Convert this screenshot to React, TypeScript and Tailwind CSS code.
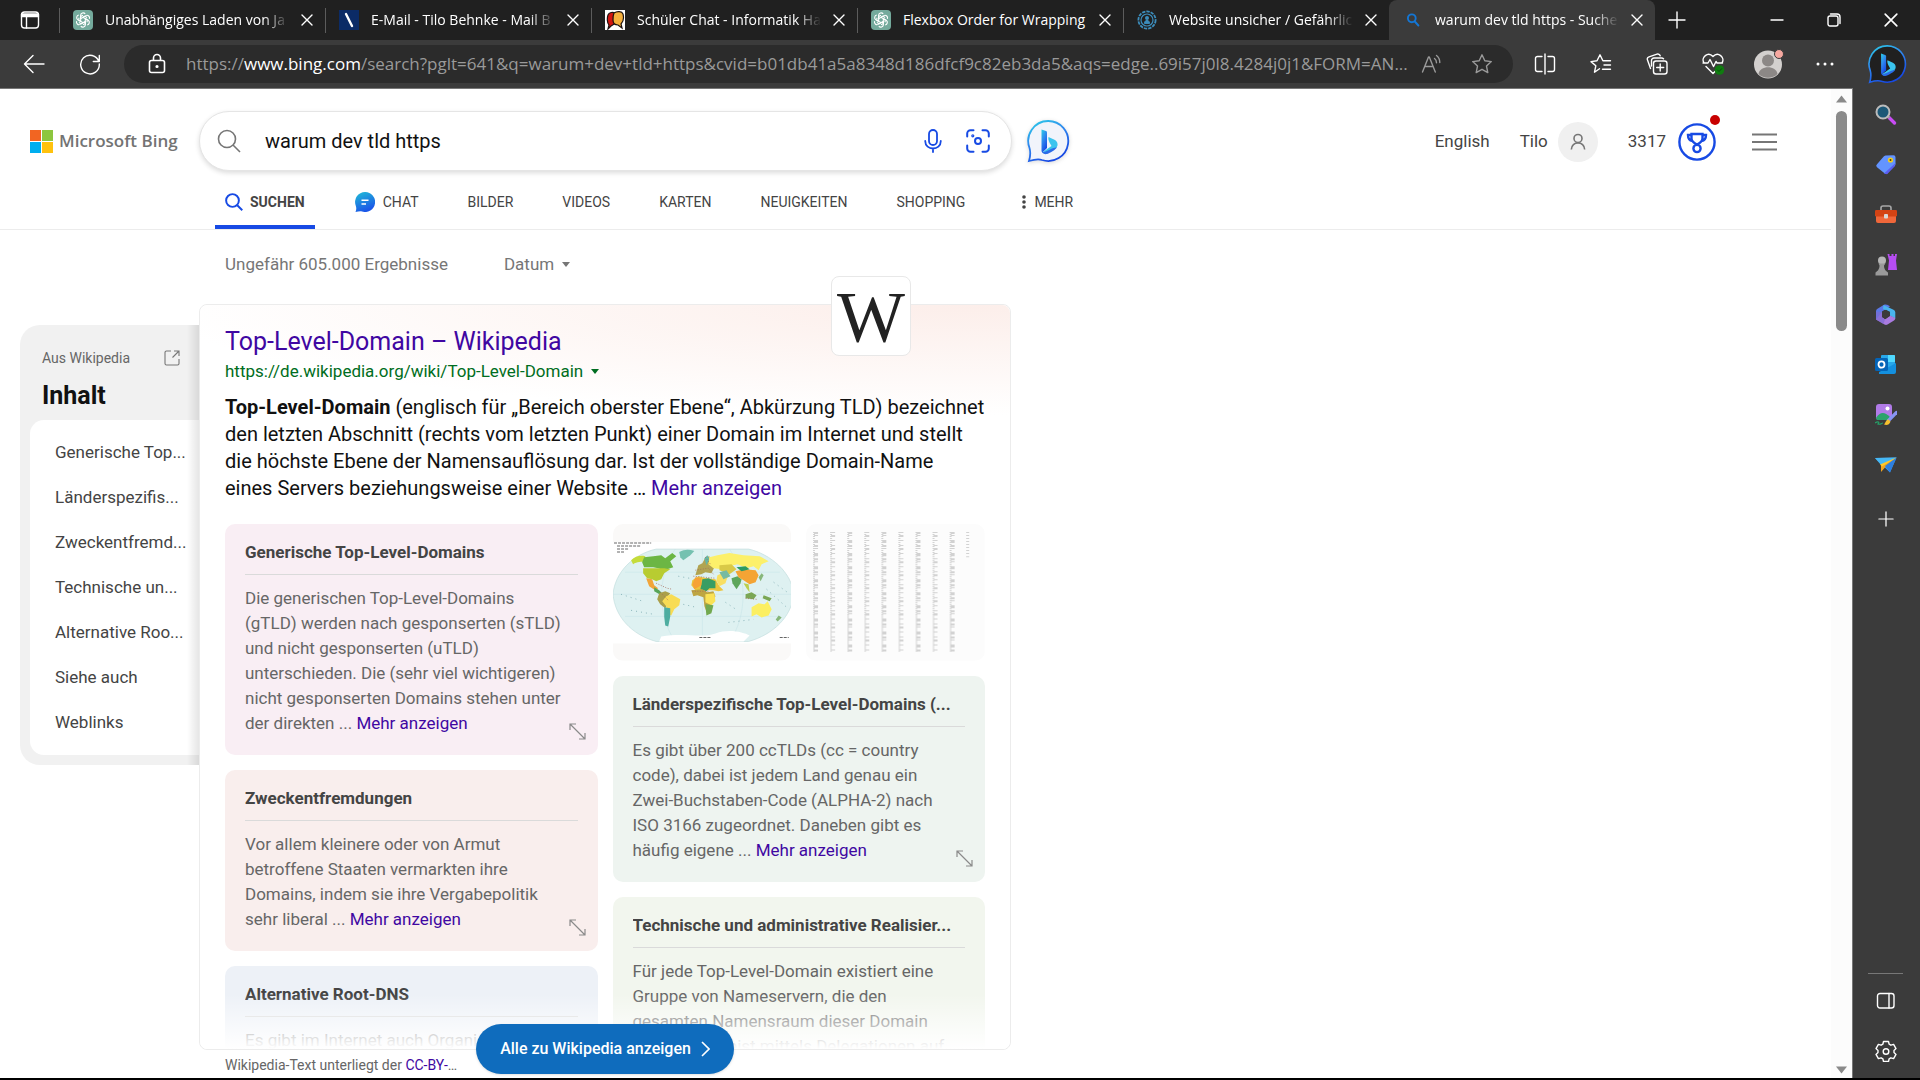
import React from 'react';

type IconProps = { className?: string };

/* ---------- Browser chrome icons ---------- */

const line = {
  fill: 'none',
  stroke: 'currentColor',
  strokeWidth: 1.4,
  strokeLinecap: 'round' as const,
  strokeLinejoin: 'round' as const,
};

const CloseIcon = ({ className = 'size-3' }: IconProps) => (
  <svg viewBox="0 0 12 12" className={className} {...line}>
    <path d="M1 1l10 10M11 1L1 11" />
  </svg>
);

const PlusIcon = ({ className = 'size-[18px]' }: IconProps) => (
  <svg viewBox="0 0 18 18" className={className} {...line}>
    <path d="M9 1v16M1 9h16" />
  </svg>
);

const WorkspaceIcon = () => (
  <svg viewBox="0 0 20 20" className="size-5" {...line}>
    <rect x="1.5" y="2" width="17" height="16" rx="3" />
    <path d="M2 4.5h16M2 6h16" strokeWidth="2.4" />
    <path d="M6.5 6v12" />
  </svg>
);

const ChatGptIcon = () => (
  <svg viewBox="0 0 20 20" className="size-5 shrink-0">
    <rect width="20" height="20" rx="4" fill="#74aa9c" />
    <g fill="none" stroke="#fff" strokeWidth="1.1">
      {[0, 60, 120, 180, 240, 300].map((r) => (
        <path key={r} transform={`rotate(${r} 10 10)`} d="M7.6 8.7V5.4a2.6 2.6 0 0 1 4.6-1.5M7.6 8.7l4.2-2.4 2.3 1.3" />
      ))}
    </g>
  </svg>
);

const MailIcon = () => (
  <svg viewBox="0 0 20 20" className="size-5 shrink-0">
    <rect width="20" height="20" fill="#0b2b66" />
    <path d="M7 4l6 12" stroke="#fff" strokeWidth="2.4" strokeLinecap="round" />
  </svg>
);

const MaskIcon = () => (
  <svg viewBox="0 0 20 20" className="size-5 shrink-0">
    <rect width="20" height="20" fill="#fff" />
    <path d="M3 5c1-3 5-3 7-2l1 10-5 3-3 3 1-4c-2-2-2-7-1-10z" fill="#d2150f" stroke="#1b1110" strokeWidth="1.2" />
    <path d="M9 3c3-2 8-2 9 1 1 4 0 8-2 10l1 4-4-3c-3 0-5-2-5-5 0-3 0-5 1-7z" fill="#f6b13d" stroke="#1b1110" strokeWidth="1.2" />
  </svg>
);

const RingIcon = () => (
  <svg viewBox="0 0 20 20" className="size-5 shrink-0" fill="none" stroke="#3c8dbc">
    <circle cx="10" cy="10" r="8.6" strokeWidth="1.8" strokeDasharray="3.4 1" />
    <circle cx="10" cy="10" r="6" strokeWidth="1.2" />
    <circle cx="10" cy="8" r="2" fill="#3c8dbc" stroke="none" />
    <path d="M7.4 13.4c0-4 5.2-4 5.2 0z" fill="#3c8dbc" />
  </svg>
);

const TabSearchIcon = () => (
  <svg viewBox="0 0 20 20" className="size-5 shrink-0" fill="none" stroke="#1476d4" strokeWidth="1.9" strokeLinecap="round">
    <circle cx="8.8" cy="8.3" r="3.9" />
    <path d="M11.8 11.5l3.6 4" />
  </svg>
);

const BackIcon = () => (
  <svg viewBox="0 0 22 22" className="size-[22px]" {...line}>
    <path d="M21 11H1.5M10 2.5L1.5 11l8.5 8.5" />
  </svg>
);

const RefreshIcon = () => (
  <svg viewBox="0 0 22 22" className="size-[22px]" {...line}>
    <path d="M19.8 8.5A9.3 9.3 0 1 0 20.3 11M20.3 2.5v6h-6" />
  </svg>
);

const LockIcon = () => (
  <svg viewBox="0 0 18 22" className="h-[22px] w-[18px] shrink-0" {...line} strokeWidth="1.6">
    <rect x="1.5" y="7.5" width="15" height="12" rx="2" />
    <path d="M5.5 7V5a3.5 3.5 0 0 1 7 0v2" />
    <circle cx="9" cy="13.5" r=".8" fill="currentColor" />
  </svg>
);

const ReadAloudIcon = () => (
  <svg viewBox="0 0 22 20" className="h-5 w-[22px]" {...line}>
    <path d="M1.5 18L7.5 3h.8l6 15M3.7 12.5h8.3" />
    <path d="M13.5 4.5c1.3 1 2 2.5 2 4.2M15.5 1.5c2.2 1.6 3.3 4 3.3 7" />
  </svg>
);

const StarIcon = () => (
  <svg viewBox="0 0 22 22" className="size-[22px]" {...line}>
    <path d="M11 1.8l2.8 6 6.5.8-4.8 4.5 1.3 6.5-5.8-3.3-5.8 3.3 1.3-6.5L1.7 8.6l6.5-.8z" />
  </svg>
);

const SplitIcon = () => (
  <svg viewBox="0 0 22 22" className="size-[22px]" {...line}>
    <path d="M11 1v20M8 3.5H3.5a2 2 0 0 0-2 2v11a2 2 0 0 0 2 2H8M14 3.5h4.5a2 2 0 0 1 2 2v11a2 2 0 0 1-2 2H14" />
  </svg>
);

const FavoritesIcon = () => (
  <svg viewBox="0 0 22 22" className="size-[22px]" {...line}>
    <path d="M9.5 15.7l-5 3.5 1.3-6.4L1 8.6l6-.8 3-6 2.9 6h7.6M14 12h6.5M12.5 16.2h8" />
  </svg>
);

const CollectionsIcon = () => (
  <svg viewBox="0 0 22 22" className="size-[22px]" {...line}>
    <rect x="7.5" y="8" width="13.5" height="13" rx="2.5" />
    <path d="M14.2 11v7M10.7 14.5h7M4.5 15.5L1.5 7a2.5 2.5 0 0 1 1.5-3.2l8-2.6a2.5 2.5 0 0 1 3.2 1.6M5.5 13V7.5A2.5 2.5 0 0 1 8 5h7.5a2.5 2.5 0 0 1 2 .8" />
  </svg>
);

const HealthIcon = () => (
  <svg viewBox="0 0 24 24" className="size-6" {...line}>
    <path d="M3 11C-.5 5.5 7-1 12 4.5 17-1 24.5 5.5 21 11M5 14.5l7 7 2-2M2 11h5l2-3.5 3.5 7 2.5-5 1 1.5h5.5" />
    <circle cx="18.5" cy="18" r="4.8" fill="#107c10" stroke="none" />
    <path d="M16.5 18l1.5 1.5 2.7-2.8" strokeWidth="1" stroke="#0a4d0a" />
  </svg>
);

const ProfileIcon = () => (
  <svg viewBox="0 0 32 30" className="h-[30px] w-8">
    <circle cx="15" cy="15.5" r="14" fill="#d3d0ce" />
    <circle cx="15" cy="11.5" r="6" fill="#8c8886" />
    <path d="M5.5 25c1-9 18-9 19 0a14 14 0 0 1-19 0z" fill="#8c8886" />
    <circle cx="26" cy="5" r="4.5" fill="#f6a8a0" stroke="#3b3b3b" />
  </svg>
);

const BingChatIcon = ({ dark = false }: { dark?: boolean }) => {
  const id = dark ? 'bing-dark' : 'bing-light';
  return (
    <svg viewBox="0 0 44 44" className={dark ? 'size-10' : 'size-11 drop-shadow-sm'}>
      <defs>
        <linearGradient id={id} x1="0" y1="0" x2=".5" y2="1">
          <stop offset="0" stopColor="#2bd0e8" />
          <stop offset=".5" stopColor="#2f87ee" />
          <stop offset="1" stopColor="#174ae4" />
        </linearGradient>
      </defs>
      <path
        d="M22 2a20 20 0 1 1-6 39c-4-1.5-8-.5-13 1 1.5-5 2-8 .5-13A20 20 0 0 1 22 2z"
        fill={dark ? '#202020' : '#f1f4fb'}
        stroke={`url(#${id})`}
        strokeWidth="1.8"
      />
      <path d="M15.5 10.5l4.5 1.6c.7.3 1 .8 1 1.5V29l-4.5 4.5c-1-.6-1-1.5-1-2.5z" fill={`url(#${id})`} />
      <path d="M22.5 18l6 2.7c3.5 1.8 4 6 1.5 8.3l-8.5 5c-2 1-4 .7-5-.8l9-6.2-2-3.5c-.8-2-1.5-3.5-1-5.5z" fill="#3bc4ee" />
      <path d="M16 33c4 .5 9-4 15-4.8-.5 2-8 6.3-10 6.8s-4.2-.3-5-2z" fill="#2b6be8" />
    </svg>
  );
};

/* ---------- Page icons ---------- */

const SearchIcon = ({ className }: IconProps) => (
  <svg viewBox="0 0 24 24" className={className} fill="none" stroke="currentColor">
    <circle cx="10" cy="10" r="8.5" />
    <path d="M16 16l7 7" />
  </svg>
);

const MicIcon = () => (
  <svg viewBox="0 0 18 24" className="h-6 w-[18px]" fill="none" stroke="currentColor" strokeWidth="1.8" strokeLinecap="round">
    <rect x="5" y="1" width="8" height="15" rx="4" />
    <path d="M1.2 12c0 10 15.6 10 15.6 0M9 19.5v3.5" />
  </svg>
);

const LensIcon = () => (
  <svg viewBox="0 0 24 24" className="size-6" fill="none" stroke="currentColor" strokeWidth="2" strokeLinecap="round">
    <path d="M1.2 7.5V4.5a3.3 3.3 0 0 1 3.3-3.3h3M16.5 1.2h3a3.3 3.3 0 0 1 3.3 3.3v3M22.8 16.5v3a3.3 3.3 0 0 1-3.3 3.3h-3M7.5 22.8h-3a3.3 3.3 0 0 1-3.3-3.3v-3" />
    <circle cx="12" cy="12" r="3" />
    <circle cx="6.8" cy="6.8" r=".6" />
  </svg>
);

const ChatBubbleIcon = () => (
  <svg viewBox="0 0 20 20" className="size-5">
    <defs>
      <linearGradient id="chat" x1="0" y1="0" x2=".4" y2="1">
        <stop offset="0" stopColor="#21bfd6" />
        <stop offset="1" stopColor="#1a56e8" />
      </linearGradient>
    </defs>
    <path d="M10 0a10 10 0 1 1-3 19.500c-2-.5-4 .2-6.500.5 1-2.500 1-4.500.2-6.500A10 10 0 0 1 10 0z" fill="url(#chat)" />
    <path d="M6.5 8.3h7M6.5 12h4.5" stroke="#fff" strokeWidth="1.6" />
  </svg>
);

const RewardsIcon = () => (
  <svg viewBox="0 0 38 38" className="size-[38px]" fill="none" stroke="#174ae4" strokeWidth="2.4">
    <circle cx="19" cy="19" r="17.6" />
    <path d="M13.5 11h11v4.5c0 3-2.5 4.5-5.5 6-3-1.5-5.5-3-5.5-6zM13.5 12H10c0 4 1.5 5.5 4.5 6M24.5 12H28c0 4-1.5 5.5-4.5 6" />
    <circle cx="19" cy="25.5" r="3.6" />
  </svg>
);

const PersonIcon = () => (
  <svg viewBox="0 0 18 20" className="h-[18px] w-4" fill="none" stroke="#767676" strokeWidth="1.8">
    <circle cx="9" cy="6" r="4.5" />
    <path d="M1.5 18.5c0-10 15-10 15 0" />
  </svg>
);

const ExternalIcon = () => (
  <svg viewBox="0 0 16 16" className="size-4" fill="none" stroke="#767676" strokeWidth="1.1">
    <path d="M7 1H2.5A1.5 1.5 0 0 0 1 2.5v11A1.5 1.5 0 0 0 2.5 15h11a1.5 1.5 0 0 0 1.5-1.5V9M10 1h5v5M15 1L8.5 7.5" />
  </svg>
);

const ExpandIcon = () => (
  <svg viewBox="0 0 17 17" className="size-[17px]" fill="none" stroke="#8a8a8a" strokeWidth="1.2">
    <path d="M1 7V1h6M10 16h6v-6M1 1l15 15" />
  </svg>
);

const CaretIcon = ({ className }: IconProps) => (
  <svg viewBox="0 0 8 5" className={className} fill="currentColor">
    <path d="M0 0h8L4 5z" />
  </svg>
);

/* ---------- Sidebar icons ---------- */

const sidebarIcons: { label: string; icon: React.ReactNode }[] = [
  {
    label: 'Suchen',
    icon: (
      <>
        <path d="M14 13.5l5.5 5.5" stroke="#c94cf5" strokeWidth="3.4" strokeLinecap="round" />
        <path d="M12.5 12l2 2" stroke="#999" strokeWidth="2" />
        <circle cx="8" cy="8" r="6.5" fill="#1c5877" stroke="#bcbcbc" strokeWidth="2" />
      </>
    ),
  },
  {
    label: 'Shopping',
    icon: (
      <>
        <path d="M10.5 1.5l8-.3a2 2 0 0 1 2 2v7a3 3 0 0 1-1 2l-7 7a2 2 0 0 1-3 0l-7.5-6a2 2 0 0 1 0-3l6.5-7.5a3 3 0 0 1 2-1.2z" fill="#6394ff" />
        <path d="M20.5 9L9 19.5l3 .8 7.5-8z" fill="#5a5cf0" />
        <circle cx="15.5" cy="6" r="2.6" fill="#f3cf1c" />
        <circle cx="15.5" cy="6" r="1" fill="#4a3d10" />
      </>
    ),
  },
  {
    label: 'Tools',
    icon: (
      <>
        <path d="M6 7V4a2 2 0 0 1 2-2h6a2 2 0 0 1 2 2v3" fill="none" stroke="#a8a8a8" strokeWidth="1.6" />
        <path d="M1 12h20v5a2 2 0 0 1-2 2H3a2 2 0 0 1-2-2z" fill="#f0673a" />
        <rect y="6" width="22" height="6.5" rx="1.2" fill="#d44314" />
        <rect x="9" y="10" width="4" height="4.5" rx="1" fill="#d8d8d8" />
      </>
    ),
  },
  {
    label: 'Spiele',
    icon: (
      <>
        <path d="M12.5 0h2v2h2V0h2v2h1.5V0h2l-1 6.5 1 9.5H13l1-9.5z" fill="#b64df2" />
        <circle cx="7" cy="6.5" r="4" fill="#b5b5b5" />
        <path d="M3.5 9.5h7l-1.5 2c0 4 2 5.5 4 7v3H.5v-3c2-1.5 4-3 4-7z" fill="#9a9a9a" />
      </>
    ),
  },
  {
    label: 'Microsoft 365',
    icon: (
      <>
        <path d="M9 .8L2.5 4.7A3 3 0 0 0 1 7.3v8.2L7 13V7.5l8-5C13 .5 11 0 9 .8z" fill="#5b78e6" />
        <path d="M8.5 1l10 4.7a3 3 0 0 1 1.8 2.6v6.2L15 11.8V8L8 5z" fill="#49b4ee" />
        <path d="M1 15.5l8.5 5a3 3 0 0 0 3 0l6.5-4a3 3 0 0 0 1.3-2.5L15 11.5l-5 3.7L7 13V8z" fill="#a97be0" />
        <path d="M7 8v5.5l3 2-1.5 4.5L1 15.5V7.5z" fill="#7d6bd0" opacity=".7" />
        <path d="M7 8l4-2.3L15 8v4l-4.5 3L7 13z" fill="#3b3b3b" />
      </>
    ),
  },
  {
    label: 'Outlook',
    icon: (
      <>
        <rect x="6" y="1" width="14" height="14" rx="1" fill="#28a8ea" />
        <path d="M13 1h6a1 1 0 0 1 1 1v6h-7z" fill="#50d9ff" />
        <path d="M4 20h15a2 2 0 0 0 2-2V9l-9 5-8 4z" fill="#1490df" />
        <rect x="0" y="4" width="13" height="13" rx="1.5" fill="#0364b8" />
        <ellipse cx="6.5" cy="10.5" rx="3" ry="3.2" fill="none" stroke="#fff" strokeWidth="1.8" />
      </>
    ),
  },
  {
    label: 'Image Creator',
    icon: (
      <>
        <rect x="1" y="0" width="16" height="16" rx="3" fill="#b17be8" />
        <circle cx="12.5" cy="4.5" r="2" fill="#fff" />
        <path d="M1 14c4-6 8-7 14-1l-1 3H3a2 2 0 0 1-2-2z" fill="#2ba36c" />
        <path d="M21.5 8.5l-8 8" stroke="#8795f5" strokeWidth="3.2" strokeLinecap="round" />
        <path d="M13.5 15.5l2 2c-1 3.5-4 4-6.5 3 1.5-1 1.5-4.5 4.5-5z" fill="#f5c02e" />
        <path d="M0 19c3-2 5-1 3 1 3 1 3-1 5-1" fill="none" stroke="#25a269" strokeWidth="1.2" />
      </>
    ),
  },
  {
    label: 'Drop',
    icon: (
      <>
        <path d="M0 4l21.5-.5L15 18.5z" fill="#3d9df0" />
        <path d="M21.5 3.5L6 11v7l4-4.5z" fill="#f0a51f" />
        <path d="M21.5 3.5L0 4l6 7z" fill="#46b8f5" />
        <path d="M21.5 3.5L10 12l5 6.5z" fill="#2d7fe0" />
        <path d="M21.5 3.5L5 10.5l2 2z" fill="#ffc928" />
      </>
    ),
  },
];

/* ---------- Data ---------- */

const tabs = [
  { title: 'Unabhängiges Laden von Ja', icon: <ChatGptIcon />, fade: true },
  { title: 'E-Mail - Tilo Behnke - Mail B', icon: <MailIcon />, fade: true },
  { title: 'Schüler Chat - Informatik Ha', icon: <MaskIcon />, fade: true },
  { title: 'Flexbox Order for Wrapping', icon: <ChatGptIcon /> },
  { title: 'Website unsicher / Gefährlic', icon: <RingIcon />, fade: true },
  { title: 'warum dev tld https - Suche', icon: <TabSearchIcon />, active: true, fade: true },
];

const toc = [
  'Generische Top...',
  'Länderspezifis...',
  'Zweckentfremd...',
  'Technische un...',
  'Alternative Roo...',
  'Siehe auch',
  'Weblinks',
];

const navItems = ['BILDER', 'VIDEOS', 'KARTEN', 'NEUIGKEITEN', 'SHOPPING'];

/* ---------- Components ---------- */

const TabStrip = () => (
  <div className="flex h-10 shrink-0 items-stretch bg-[#202020]">
    <button aria-label="Tabs" className="flex w-[59px] shrink-0 items-center justify-center">
      <WorkspaceIcon />
    </button>
    {tabs.map((tab) => (
      <div
        key={tab.title}
        className={
          tab.active
            ? 'flex w-[266px] items-center gap-3 rounded-t-lg bg-[#3b3b3b] pr-3 pl-3.5'
            : 'flex w-[266px] items-center gap-3 pr-3 pl-3.5 shadow-[inset_1px_0_0_#5c5c5c] [clip-path:inset(8px_0_7px_0)]'
        }
      >
        {tab.icon}
        <span
          className={
            tab.fade
              ? 'flex-1 overflow-hidden text-sm whitespace-nowrap [mask-image:linear-gradient(to_right,black_86%,transparent)]'
              : 'flex-1 overflow-hidden text-sm whitespace-nowrap'
          }
        >
          {tab.title}
        </span>
        <button aria-label="Tab schließen">
          <CloseIcon />
        </button>
      </div>
    ))}
    <button aria-label="Neuer Tab" className="flex w-11 items-center justify-center">
      <PlusIcon />
    </button>
    <div className="ml-auto flex">
      <button aria-label="Minimieren" className="flex w-[57px] items-center justify-center">
        <svg viewBox="0 0 14 14" className="size-3.5" {...line}>
          <path d="M1 7h12" />
        </svg>
      </button>
      <button aria-label="Verkleinern" className="flex w-[57px] items-center justify-center">
        <svg viewBox="0 0 14 14" className="size-3.5" {...line}>
          <rect x="1" y="3" width="10" height="10" rx="2" />
          <path d="M3.5 1H10a3 3 0 0 1 3 3v6.5" />
        </svg>
      </button>
      <button aria-label="Schließen" className="flex w-[58px] items-center justify-center">
        <CloseIcon className="size-3.5" />
      </button>
    </div>
  </div>
);

const ToolButton = ({ label, children }: { label: string; children: React.ReactNode }) => (
  <button aria-label={label} className="flex w-14 shrink-0 items-center justify-center">
    {children}
  </button>
);

const Toolbar = () => (
  <div className="flex h-12 shrink-0 items-stretch bg-[#3b3b3b] pl-1.5">
    <ToolButton label="Zurück">
      <BackIcon />
    </ToolButton>
    <ToolButton label="Aktualisieren">
      <RefreshIcon />
    </ToolButton>
    <div className="my-[5px] mr-1 ml-1.5 flex min-w-0 flex-1 items-center rounded-full bg-[#2b2b2b] pr-5 pl-6">
      <LockIcon />
      <div
        role="textbox"
        aria-label="Adresse"
        className="ml-5 min-w-0 flex-1 truncate text-[17px] leading-6 text-[#9a9a9a]"
      >
        https://<span className="text-white">www.bing.com</span>
        /search?pglt=641&amp;q=warum+dev+tld+https&amp;cvid=b01db41a5a8348d186dfcf9c82eb3da5&amp;aqs=edge..69i57j0l8.4284j0j1&amp;FORM=AN...
      </div>
      <div className="flex gap-7 text-[#9a9a9a]">
        <button aria-label="Laut vorlesen">
          <ReadAloudIcon />
        </button>
        <button aria-label="Zu Favoriten hinzufügen">
          <StarIcon />
        </button>
      </div>
    </div>
    <ToolButton label="Bildschirm teilen">
      <SplitIcon />
    </ToolButton>
    <ToolButton label="Favoriten">
      <FavoritesIcon />
    </ToolButton>
    <ToolButton label="Sammlungen">
      <CollectionsIcon />
    </ToolButton>
    <ToolButton label="Browser-Essentials">
      <HealthIcon />
    </ToolButton>
    <ToolButton label="Profil">
      <ProfileIcon />
    </ToolButton>
    <ToolButton label="Einstellungen und mehr">
      <svg viewBox="0 0 18 4" className="h-1 w-[18px]" fill="currentColor">
        <circle cx="2" cy="2" r="1.5" />
        <circle cx="9" cy="2" r="1.5" />
        <circle cx="16" cy="2" r="1.5" />
      </svg>
    </ToolButton>
    <button aria-label="Bing Chat" className="flex w-[67px] items-center justify-center">
      <BingChatIcon dark />
    </button>
  </div>
);

const Sidebar = () => (
  <aside className="flex w-[68px] shrink-0 flex-col items-center border-l border-[#777] bg-[#3b3b3b] pt-0.5 pr-0.5 pb-0.5 text-white">
    {sidebarIcons.map(({ label, icon }) => (
      <button key={label} aria-label={label} className="flex h-[50px] w-full items-center justify-center">
        <svg viewBox="0 0 22 22" className="size-[22px]">
          {icon}
        </svg>
      </button>
    ))}
    <button aria-label="Anpassen" className="mt-1 flex h-[50px] w-full items-center justify-center">
      <PlusIcon className="size-4" />
    </button>
    <div className="mt-auto h-px w-[35px] bg-[#777]" />
    <button aria-label="Seitenleiste ausblenden" className="mt-0.5 flex h-[50px] w-full items-center justify-center">
      <svg viewBox="0 0 20 18" className="h-[18px] w-5" {...line}>
        <rect x="1.5" y="1.5" width="16.5" height="14.5" rx="2.5" />
        <path d="M13 1.5V16" />
      </svg>
    </button>
    <button aria-label="Einstellungen" className="flex h-[50px] w-full items-center justify-center">
      <svg viewBox="0 0 22 22" className="size-[22px]" {...line}>
        <path d="M8.5 1.5h5l.6 2.7 1.8 1 2.7-.8 2.4 4.2-2 1.9v2l2 1.900-2.400 4.200-2.700-.8-1.800 1-.6 2.700h-5l-.6-2.700-1.800-1-2.700.8L1 14.400l2-1.900v-2L1 8.600l2.400-4.200 2.700.8 1.800-1z" />
        <circle cx="11" cy="11.5" r="2.8" />
      </svg>
    </button>
  </aside>
);

const Scrollbar = () => (
  <div className="flex w-[21px] shrink-0 flex-col items-center bg-[#fcfcfc] text-[#8a8a8a]">
    <CaretIcon className="mt-1.5 h-2 w-[11px] rotate-180" />
    <div className="mt-2 h-[220px] w-[11px] rounded-full bg-[#8a8a8a]" />
    <CaretIcon className="mt-auto mb-1 h-2 w-[11px]" />
  </div>
);

const PageHeader = () => (
  <header className="border-b border-[#ececec] pt-[22px]">
    <div className="flex items-center pl-[30px]">
      <a href="#" className="flex w-[169px] shrink-0 items-center gap-1.5 font-['Open_Sans',sans-serif] text-[17px] font-semibold text-[#737373]">
        <svg viewBox="0 0 23 23" className="size-[23px] shrink-0">
          <path fill="#f26522" d="M0 0h11v11H0z" />
          <path fill="#8dc63f" d="M12 0h11v11H12z" />
          <path fill="#00aeef" d="M0 12h11v11H0z" />
          <path fill="#ffc20e" d="M12 12h11v11H12z" />
        </svg>
        Microsoft Bing
      </a>
      <form className="flex h-[60px] w-[813px] items-center rounded-full border border-[#e5e5e5] bg-white pr-[21px] pl-[17px] shadow-[0_2px_5px_rgba(0,0,0,0.14)]">
        <SearchIcon className="size-6 text-[#767676] [stroke-width:1.6]" />
        <input
          aria-label="Suchbegriff"
          defaultValue="warum dev tld https"
          className="ml-6 min-w-0 flex-1 text-xl text-[#111] outline-none"
        />
        <div className="flex items-center gap-6 text-[#174ae4]">
          <button type="button" aria-label="Sprachsuche">
            <MicIcon />
          </button>
          <button type="button" aria-label="Bildsuche">
            <LensIcon />
          </button>
        </div>
      </form>
      <button aria-label="Chat" className="ml-3.5">
        <BingChatIcon />
      </button>
      <div className="mr-[54px] ml-auto flex items-center pt-0.5 text-[17px] text-[#444]">
        <a href="#" className="mr-[30px]">
          English
        </a>
        <a href="#" className="mr-[30px] flex items-center gap-2.5">
          Tilo
          <span className="flex size-10 items-center justify-center rounded-full bg-[#f0f0f0]">
            <PersonIcon />
          </span>
        </a>
        <a href="#" className="relative mr-9 flex items-center gap-3">
          3317
          <RewardsIcon />
          <span className="absolute -top-2 -right-1 size-2.5 rounded-full bg-[#c80000]" />
        </a>
        <button aria-label="Menü">
          <svg viewBox="0 0 25 18" className="h-[18px] w-[25px]" stroke="#767676" strokeWidth="2">
            <path d="M0 1.5h25M0 9h25M0 16.5h25" />
          </svg>
        </button>
      </div>
    </div>
    <nav className="flex h-[58px] items-stretch pl-[215px] text-sm text-[#444]">
      <a href="#" className="mr-10 flex items-center gap-[7px] border-b-4 border-[#174ae4] px-2.5 pt-2 font-bold">
        <SearchIcon className="size-[18px] text-[#174ae4] [stroke-width:2.6]" />
        SUCHEN
      </a>
      <a href="#" className="mr-[49px] flex items-center gap-2 pt-1">
        <ChatBubbleIcon />
        CHAT
      </a>
      {navItems.map((item) => (
        <a key={item} href="#" className="mr-[49px] flex items-center pt-1">
          {item}
        </a>
      ))}
      <button className="ml-2 flex items-center gap-2 pt-1">
        <svg viewBox="0 0 4 14" className="h-3.5 w-1" fill="#444">
          <circle cx="2" cy="2" r="1.8" />
          <circle cx="2" cy="7" r="1.8" />
          <circle cx="2" cy="12" r="1.8" />
        </svg>
        MEHR
      </button>
    </nav>
  </header>
);

const Contents = () => (
  <aside className="relative mt-[21px] w-[179px] shrink-0 self-start rounded-l-[20px] bg-[#f1f1f1] pb-2.5 pl-2.5">
    <div className="flex h-[95px] flex-col justify-between pt-[23px] pr-[19px] pb-[7px] pl-3">
      <div className="flex items-center justify-between text-sm leading-5 text-[#666]">
        Aus Wikipedia
        <ExternalIcon />
      </div>
      <h2 className="text-[25px] leading-[34px] font-bold text-[#111]">Inhalt</h2>
    </div>
    <ul className="rounded-l-[14px] bg-white py-2.5 pl-[25px] text-[17px] leading-[45px] text-[#444]">
      {toc.map((item) => (
        <li key={item}>
          <a href="#">{item}</a>
        </li>
      ))}
    </ul>
    <div className="absolute inset-y-0 right-0 w-3 bg-linear-to-r from-transparent to-black/10" />
  </aside>
);

const TopicCard = ({ title, text, color, expandable = true }: { title: string; text: string; color: string; expandable?: boolean }) => (
  <section className={`relative rounded-[10px] px-5 pt-4 pb-[19px] text-[17px] ${color}`}>
    <h3 className="truncate border-b border-[#dadada] pb-2.5 leading-6 font-bold text-[#444]">{title}</h3>
    <p className="mt-[11px] leading-[25px] whitespace-pre-line text-[#666]">
      {text}
      {expandable && (
        <>
          {' ... '}
          <a href="#" className="text-[#4007a2]">
            Mehr anzeigen
          </a>
        </>
      )}
    </p>
    {expandable && (
      <button aria-label="Erweitern" className="absolute right-3 bottom-[15px]">
        <ExpandIcon />
      </button>
    )}
  </section>
);

const WorldMap = () => (
  <svg viewBox="0 0 178 136" role="img" aria-label="Weltkarte" className="w-full rounded-[10px]">
    <rect width="178" height="136" fill="#faf9f8" />
    <rect y="18" width="178" height="101" fill="#fff" />
    <path d="M43 25h92c22 5 43 23 45 45-2 22-20 40-45 47H43C18 110 2 92 0 70c2-22 20-40 43-45z" fill="#def1f1" stroke="#c3dede" strokeWidth=".7" />
    <g fill="none" stroke="#c5e2e6" strokeWidth=".5">
      <path d="M0 70h178M12 48h154M12 92h154M89 25v92M62 25c-18 25-18 67 0 92M116 25c18 25 18 67 0 92" />
    </g>
    <path d="M48 112c24-4 40 2 54-3s28-1 34 2l-6 6H46z" fill="#fff" />
    <path d="M18 36c4-4 9-5 14-4l1 5c-5 1-9 0-13 3z" fill="#c5dc3b" />
    <path d="M31 33l9-1 8-1 4 3 7-5 4 3-6 5 3 6-9 3-6-2-5-1H31l-2-5z" fill="#6cb644" />
    <path d="M30 44h21l6 1-6 4-3 6-5 2-4-2-5-1-4-5z" fill="#b8cc31" />
    <path d="M33 54l6 1 2 6 4 3-3 2-6-4z" fill="#f1a539" />
    <path d="M41 63l5 3 4 4-2 1-7-4z" fill="#57a558" />
    <path d="M66 28c5-3 10-3 15-1l-4 4-7 5-3-3z" fill="#75c1b0" />
    <path d="M46 69l6-2 5 2-3 4 1 6-3 5-5-4-3-5z" fill="#aa9f49" />
    <path d="M53 72l5-2 9 5-1 6-5 4-3 6-4-1-1-8-4-5z" fill="#f8dc54" />
    <path d="M51 83l6 1v8l-2 10-3-1-1-9z" fill="#4eada0" />
    <path d="M82 51l3-10 4-2 3-6 4-1v7l5 4-3 6-6-1-4 2z" fill="#b1a451" />
    <path d="M91 34l3-3 2 4-3 6z" fill="#64b5a4" />
    <path d="M96 33l8-2 12-2 14 2 16 1 9 5-7 3-3 6-5-4-7 2-9-4-8 2-7 3-9-1-5-4z" fill="#fcf06a" />
    <path d="M106 41l12-1 5 5-7 5-10-4z" fill="#d9c947" />
    <path d="M79 56l6-4 8 2 9 1 4 7 4 4-5 1-5-1H82l-4-5z" fill="#ecc53c" />
    <path d="M89 55l6-1 7 3v7h-6l-3 3-6-2z" fill="#399d63" />
    <path d="M82 53l6 1v7l-7 4-2-5z" fill="#f6a237" />
    <path d="M78 66l11-1 5 3 6-1 2 5-4 8-1 8-3 2-3-8-1-9-6-2-4 1z" fill="#bea542" />
    <path d="M92 70l9-1 1 8-4 4-6-3z" fill="#fae256" />
    <path d="M92 80l8 1-2 8-5 2z" fill="#72a94f" />
    <path d="M104 51l7-3 3 5-2 6-6 3-3-6z" fill="#f8df62" />
    <path d="M106 48l7-2 4 6-7 3z" fill="#77baa1" />
    <path d="M118 54l6-2 4 3-1 4-4 6-4-6z" fill="#5da65b" />
    <path d="M122 47l9-2 11 1 3 5-3 7-6 2-6-4-5-3z" fill="#f4a434" />
    <path d="M123 43l9-1 4 3-8 2z" fill="#2a9a62" />
    <path d="M130 59l5 1 1 8-3-4z" fill="#bccf4d" />
    <path d="M132 70l6-2 5 3-3 4-8-1zM150 71l8 3-2 3-7-3z" fill="#7ba755" />
    <path d="M138 83l7-4 6 1 3-3 4 8-3 6-7 2-5-3-5 2z" fill="#fbef61" />
    <path d="M165 91l3 2-4 4-2-2zM145 53l3-4 2 2-3 6z" fill="#87b77a" />
    <g stroke="#a66d5c" strokeWidth=".8" strokeDasharray="1 1.5" fill="none">
      <path d="M43 59l11 5 5 1M82 46l13-2 5 6M79 67h17M132 74l11 1M80 52l22 2M92 33l5 7M47 68l8 8" />
    </g>
    <path d="M1 19h37M4 22h23M4 25h12M4 28h8M86 113h12M166 113h9" stroke="#666" strokeWidth="1" strokeDasharray="3 1" />
    <g stroke="#78a7ae" strokeWidth=".8" strokeDasharray="1 4" fill="none">
      <path d="M8 70l22 7M18 86l23 4M65 52l11 2M70 80l13 3M112 78l12 8M115 98l25-3M153 65l20 18M160 58l15 11" />
    </g>
  </svg>
);

// Columns of the domain table, too small to be legible at thumbnail size
const TableThumbnail = () => (
  <svg viewBox="0 0 178 136" role="img" aria-label="Liste der Domains" className="w-full rounded-[10px]">
    <rect width="178" height="136" fill="#fcfcfc" />
    <g fill="none" stroke="#d2d2d2">
      {[7, 24, 41, 58, 75, 92, 109, 126, 143].map((x, i) => (
        <g key={x}>
          <path d={`M${x + 1} 8V128`} strokeWidth="2" strokeDasharray="1 1" />
          <path d={`M${x + 3} 8V128`} strokeWidth="4" strokeDasharray={i % 2 ? '1 2 2 3 1 4' : '2 1 1 4 3 2'} />
        </g>
      ))}
      <path d="M161 8v26" strokeWidth="3" strokeDasharray="1 2" />
    </g>
  </svg>
);

const WikipediaPanel = () => (
  <article className="relative w-[812px] rounded-lg border border-[#ececec] bg-white">
    <div className="relative max-h-[744px] overflow-hidden rounded-lg bg-[radial-gradient(100%_110px_at_95%_0,#fceeea,#ffffff)] px-[25px] pt-[21px]">
      <h1 className="text-[25px] leading-8">
        <a href="#" className="text-[#4007a2]">
          Top-Level-Domain – Wikipedia
        </a>
      </h1>
      <div className="flex items-center gap-2 text-[17px] leading-[26px] text-[#006d21]">
        <a href="#">https://de.wikipedia.org/wiki/Top-Level-Domain</a>
        <CaretIcon className="h-[5px] w-2" />
      </div>
      <p className="mt-2.5 text-xl leading-[27px] whitespace-pre-line text-[#111]">
        <strong>Top-Level-Domain</strong>
        {' (englisch für „Bereich oberster Ebene“, Abkürzung TLD) bezeichnet\nden letzten Abschnitt (rechts vom letzten Punkt) einer Domain im Internet und stellt\ndie höchste Ebene der Namensauflösung dar. Ist der vollständige Domain-Name\neines Servers beziehungsweise einer Website … '}
        <a href="#" className="text-[#4007a2]">
          Mehr anzeigen
        </a>
      </p>
      <div className="mt-[22px] grid grid-cols-2 items-start gap-[15px]">
        <div className="grid grid-cols-1 gap-[15px]">
          <TopicCard
            color="bg-[#f9eef4]"
            title="Generische Top-Level-Domains"
            text={'Die generischen Top-Level-Domains\n(gTLD) werden nach gesponserten (sTLD)\nund nicht gesponserten (uTLD)\nunterschieden. Die (sehr viel wichtigeren)\nnicht gesponserten Domains stehen unter\nder direkten'}
          />
          <TopicCard
            color="bg-[#f9eeed]"
            title="Zweckentfremdungen"
            text={'Vor allem kleinere oder von Armut\nbetroffene Staaten vermarkten ihre\nDomains, indem sie ihre Vergabepolitik\nsehr liberal'}
          />
          <TopicCard
            color="bg-[#edf1f7]"
            title="Alternative Root-DNS"
            text={'Es gibt im Internet auch Organisationen,'}
            expandable={false}
          />
        </div>
        <div className="grid grid-cols-1 gap-[15px]">
          <div className="grid grid-cols-2 gap-[15px]">
            <WorldMap />
            <TableThumbnail />
          </div>
          <TopicCard
            color="bg-[#eef4f0]"
            title="Länderspezifische Top-Level-Domains (..."
            text={'Es gibt über 200 ccTLDs (cc = country\ncode), dabei ist jedem Land genau ein\nZwei-Buchstaben-Code (ALPHA-2) nach\nISO 3166 zugeordnet. Daneben gibt es\nhäufig eigene'}
          />
          <TopicCard
            color="bg-[#f2f6ee]"
            title="Technische und administrative Realisier..."
            text={'Für jede Top-Level-Domain existiert eine\nGruppe von Nameservern, die den\ngesamten Namensraum dieser Domain\nverwalten, meist mittels Delegationen auf'}
            expandable={false}
          />
        </div>
      </div>
      <div className="absolute inset-x-0 bottom-0 h-[55px] bg-linear-to-b from-white/0 to-white" />
    </div>
    <div className="absolute -top-[29px] right-[99px] flex size-20 items-center justify-center rounded-lg border border-[#e8e8e8] bg-white pt-0.5 font-['Liberation_Serif',serif] text-[72px] leading-none text-[#222]">
      W
    </div>
    <button className="absolute -bottom-[25px] left-[276px] flex h-[50px] w-[258px] items-center justify-center gap-2.5 rounded-full bg-[#0f6cbd] font-medium text-white shadow">
      Alle zu Wikipedia anzeigen
      <svg viewBox="0 0 9 16" className="h-4 w-[9px]" fill="none" stroke="currentColor" strokeWidth="1.6">
        <path d="M1 1l7 7-7 7" />
      </svg>
    </button>
  </article>
);

export default function App() {
  return (
    <div className="flex h-screen flex-col overflow-hidden border-b-2 border-black bg-white font-['Open_Sans',sans-serif] text-white">
      <TabStrip />
      <Toolbar />
      <div className="flex min-h-0 flex-1">
        <div className="flex min-w-0 flex-1 border-t border-[#777] font-['Roboto',sans-serif]">
          <main className="min-w-0 flex-1 overflow-hidden bg-white">
            <PageHeader />
            <div className="flex gap-14 pt-[22px] pb-[27px] pl-[225px] text-[17px] leading-[25px] text-[#767676]">
              <span>Ungefähr 605.000 Ergebnisse</span>
              <button className="flex items-center gap-2">
                Datum
                <CaretIcon className="h-[5px] w-2" />
              </button>
            </div>
            <div className="flex items-start pl-5">
              <Contents />
              <div>
                <WikipediaPanel />
                <p className="pt-[5px] pl-[26px] text-sm leading-5 text-[#666]">
                  Wikipedia-Text unterliegt der{' '}
                  <a href="#" className="text-[#4007a2]">
                    CC-BY-
                  </a>
                  …
                </p>
              </div>
            </div>
          </main>
          <Scrollbar />
        </div>
        <Sidebar />
      </div>
    </div>
  );
}
